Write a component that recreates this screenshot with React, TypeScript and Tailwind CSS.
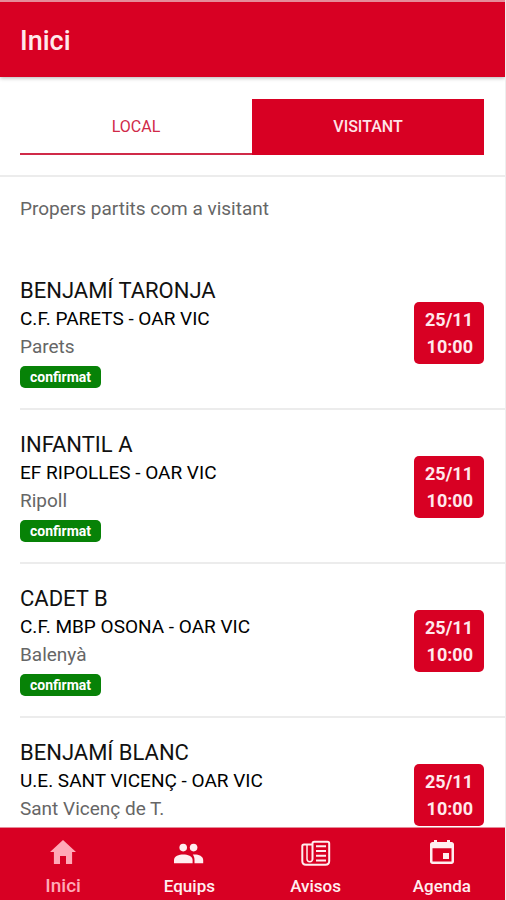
import React, { useState } from 'react';
import { IoMdCalendar, IoMdHome } from 'react-icons/io';

interface Match {
  team: string;
  game: string;
  place: string;
  date: string;
  time: string;
  status?: string;
}

const matches: Match[] = [
  { team: 'BENJAMÍ TARONJA', game: 'C.F. PARETS - OAR VIC', place: 'Parets', date: '25/11', time: '10:00', status: 'confirmat' },
  { team: 'INFANTIL A', game: 'EF RIPOLLES - OAR VIC', place: 'Ripoll', date: '25/11', time: '10:00', status: 'confirmat' },
  { team: 'CADET B', game: 'C.F. MBP OSONA - OAR VIC', place: 'Balenyà', date: '25/11', time: '10:00', status: 'confirmat' },
  { team: 'BENJAMÍ BLANC', game: 'U.E. SANT VICENÇ - OAR VIC', place: 'Sant Vicenç de T.', date: '25/11', time: '10:00' },
];

function PeopleIcon({ className }: { className?: string }) {
  return (
    <svg viewBox="0 0 32 32" fill="currentColor" className={className}>
      <circle cx="10.2" cy="11.6" r="3.8" />
      <circle cx="20.6" cy="11.6" r="3.8" />
      <path d="M1 27.300v-3.300c0-3.800 5-5.500 9.300-5.500s9.300 1.700 9.300 5.500v3.300z" />
      <path d="M19.800 18.600c5-.5 10.400 1.300 10.400 5.400v3.300h-8.700V24c0-2.200-.6-4-1.700-5.400z" />
    </svg>
  );
}

function PaperIcon({ className }: { className?: string }) {
  return (
    <svg viewBox="0 0 32 32" fill="none" stroke="currentColor" strokeWidth="2" className={className}>
      <path d="M12.500 23.500V7.500c0-1 .7-1.700 1.700-1.700h13.300c1 0 1.700.7 1.700 1.700V25c0 2.200-1.500 3.700-3.700 3.700H6C3.800 28.700 2.300 27.200 2.300 25V10.200c0-1 .7-1.700 1.700-1.700h8.500" />
      <path d="M7 9v14c0 1.700 1 2.700 2.800 2.700s2.700-1 2.700-2.700" strokeWidth="1.5" />
      <path d="M16 10.200h10M16 15h10M16 19.800h10M16 24.500h10" />
    </svg>
  );
}

const navItems = [
  { label: 'Inici', icon: IoMdHome },
  { label: 'Equips', icon: PeopleIcon },
  { label: 'Avisos', icon: PaperIcon },
  { label: 'Agenda', icon: IoMdCalendar },
];

function MatchRow({ match }: { match: Match }) {
  return (
    <li className="ml-5 flex items-center justify-between border-b-2 border-[#ececec] pt-[21px] pr-[21px] pb-[19px]">
      <div>
        <h2 className="text-[22px] leading-7 text-[#111]">{match.team}</h2>
        <p className="text-[19px] leading-7 text-black">{match.game}</p>
        <p className="text-[19px] leading-7 text-[#666]">{match.place}</p>
        <span className="mt-1 flex h-6 items-center">
          {match.status && (
            <span className="rounded-[5px] bg-[#078207] px-[10px] text-[14px] leading-[22px] font-bold text-white">
              {match.status}
            </span>
          )}
        </span>
      </div>
      <div className="rounded-[5px] bg-[#d80023] px-[11px] py-1 text-right text-[18px] leading-[27px] font-bold text-[#ffe9ec]">
        <div>{match.date}</div>
        <div>{match.time}</div>
      </div>
    </li>
  );
}

export default function App() {
  const [tab, setTab] = useState('visitant');
  const [page, setPage] = useState('Inici');

  const tabClass = (name: string) =>
    tab === name
      ? 'bg-[#d80023] text-[#ffe3e7] font-medium'
      : 'bg-white text-[#d02a48]';

  return (
    <div className="flex h-screen flex-col overflow-hidden border-r border-[#eeeeee] bg-white font-['Roboto',sans-serif]">
      <header className="shrink-0 border-t-2 border-[#e58c9a] bg-[#d80023] px-5 pt-1 shadow-[0_1px_4px_rgba(0,0,0,0.3)]">
        <h1 className="text-[27px] leading-[71px] font-medium text-[#ffe9ec]">Inici</h1>
      </header>

      {/* Local / visitant switch */}
      <div className="shrink-0 border-b-2 border-[#ececec] pt-[22px] pr-[21px] pb-5 pl-5">
        <div className="grid grid-cols-2">
          <button
            onClick={() => setTab('local')}
            className={`h-14 border-b-2 border-[#d02a48] pt-[2px] text-base ${tabClass('local')}`}
          >
            LOCAL
          </button>
          <button
            onClick={() => setTab('visitant')}
            className={`h-14 border-b-2 border-[#d80023] pt-[2px] text-base ${tabClass('visitant')}`}
          >
            VISITANT
          </button>
        </div>
      </div>

      <main className="min-h-0 flex-1 overflow-hidden">
        <p className="px-5 pt-[18px] pb-[33px] text-[19px] leading-7 text-[#666]">
          Propers partits com a {tab}
        </p>
        <ul>
          {matches.map((match) => (
            <MatchRow key={match.team} match={match} />
          ))}
        </ul>
      </main>

      {/* Bottom navigation */}
      <nav className="grid shrink-0 grid-cols-4 border-t border-[#e58c9a] bg-[#d80023]">
        {navItems.map(({ label, icon: Icon }) => (
          <button
            key={label}
            onClick={() => setPage(label)}
            className={`flex h-[72px] flex-col items-center justify-between pt-2 pb-[2px] font-medium ${
              page === label ? 'text-[19px] text-[#ffa9b7]' : 'text-[17px] text-[#ffeef0]'
            }`}
          >
            <Icon className="h-8 w-8" />
            <span className="leading-6">{label}</span>
          </button>
        ))}
      </nav>
    </div>
  );
}
